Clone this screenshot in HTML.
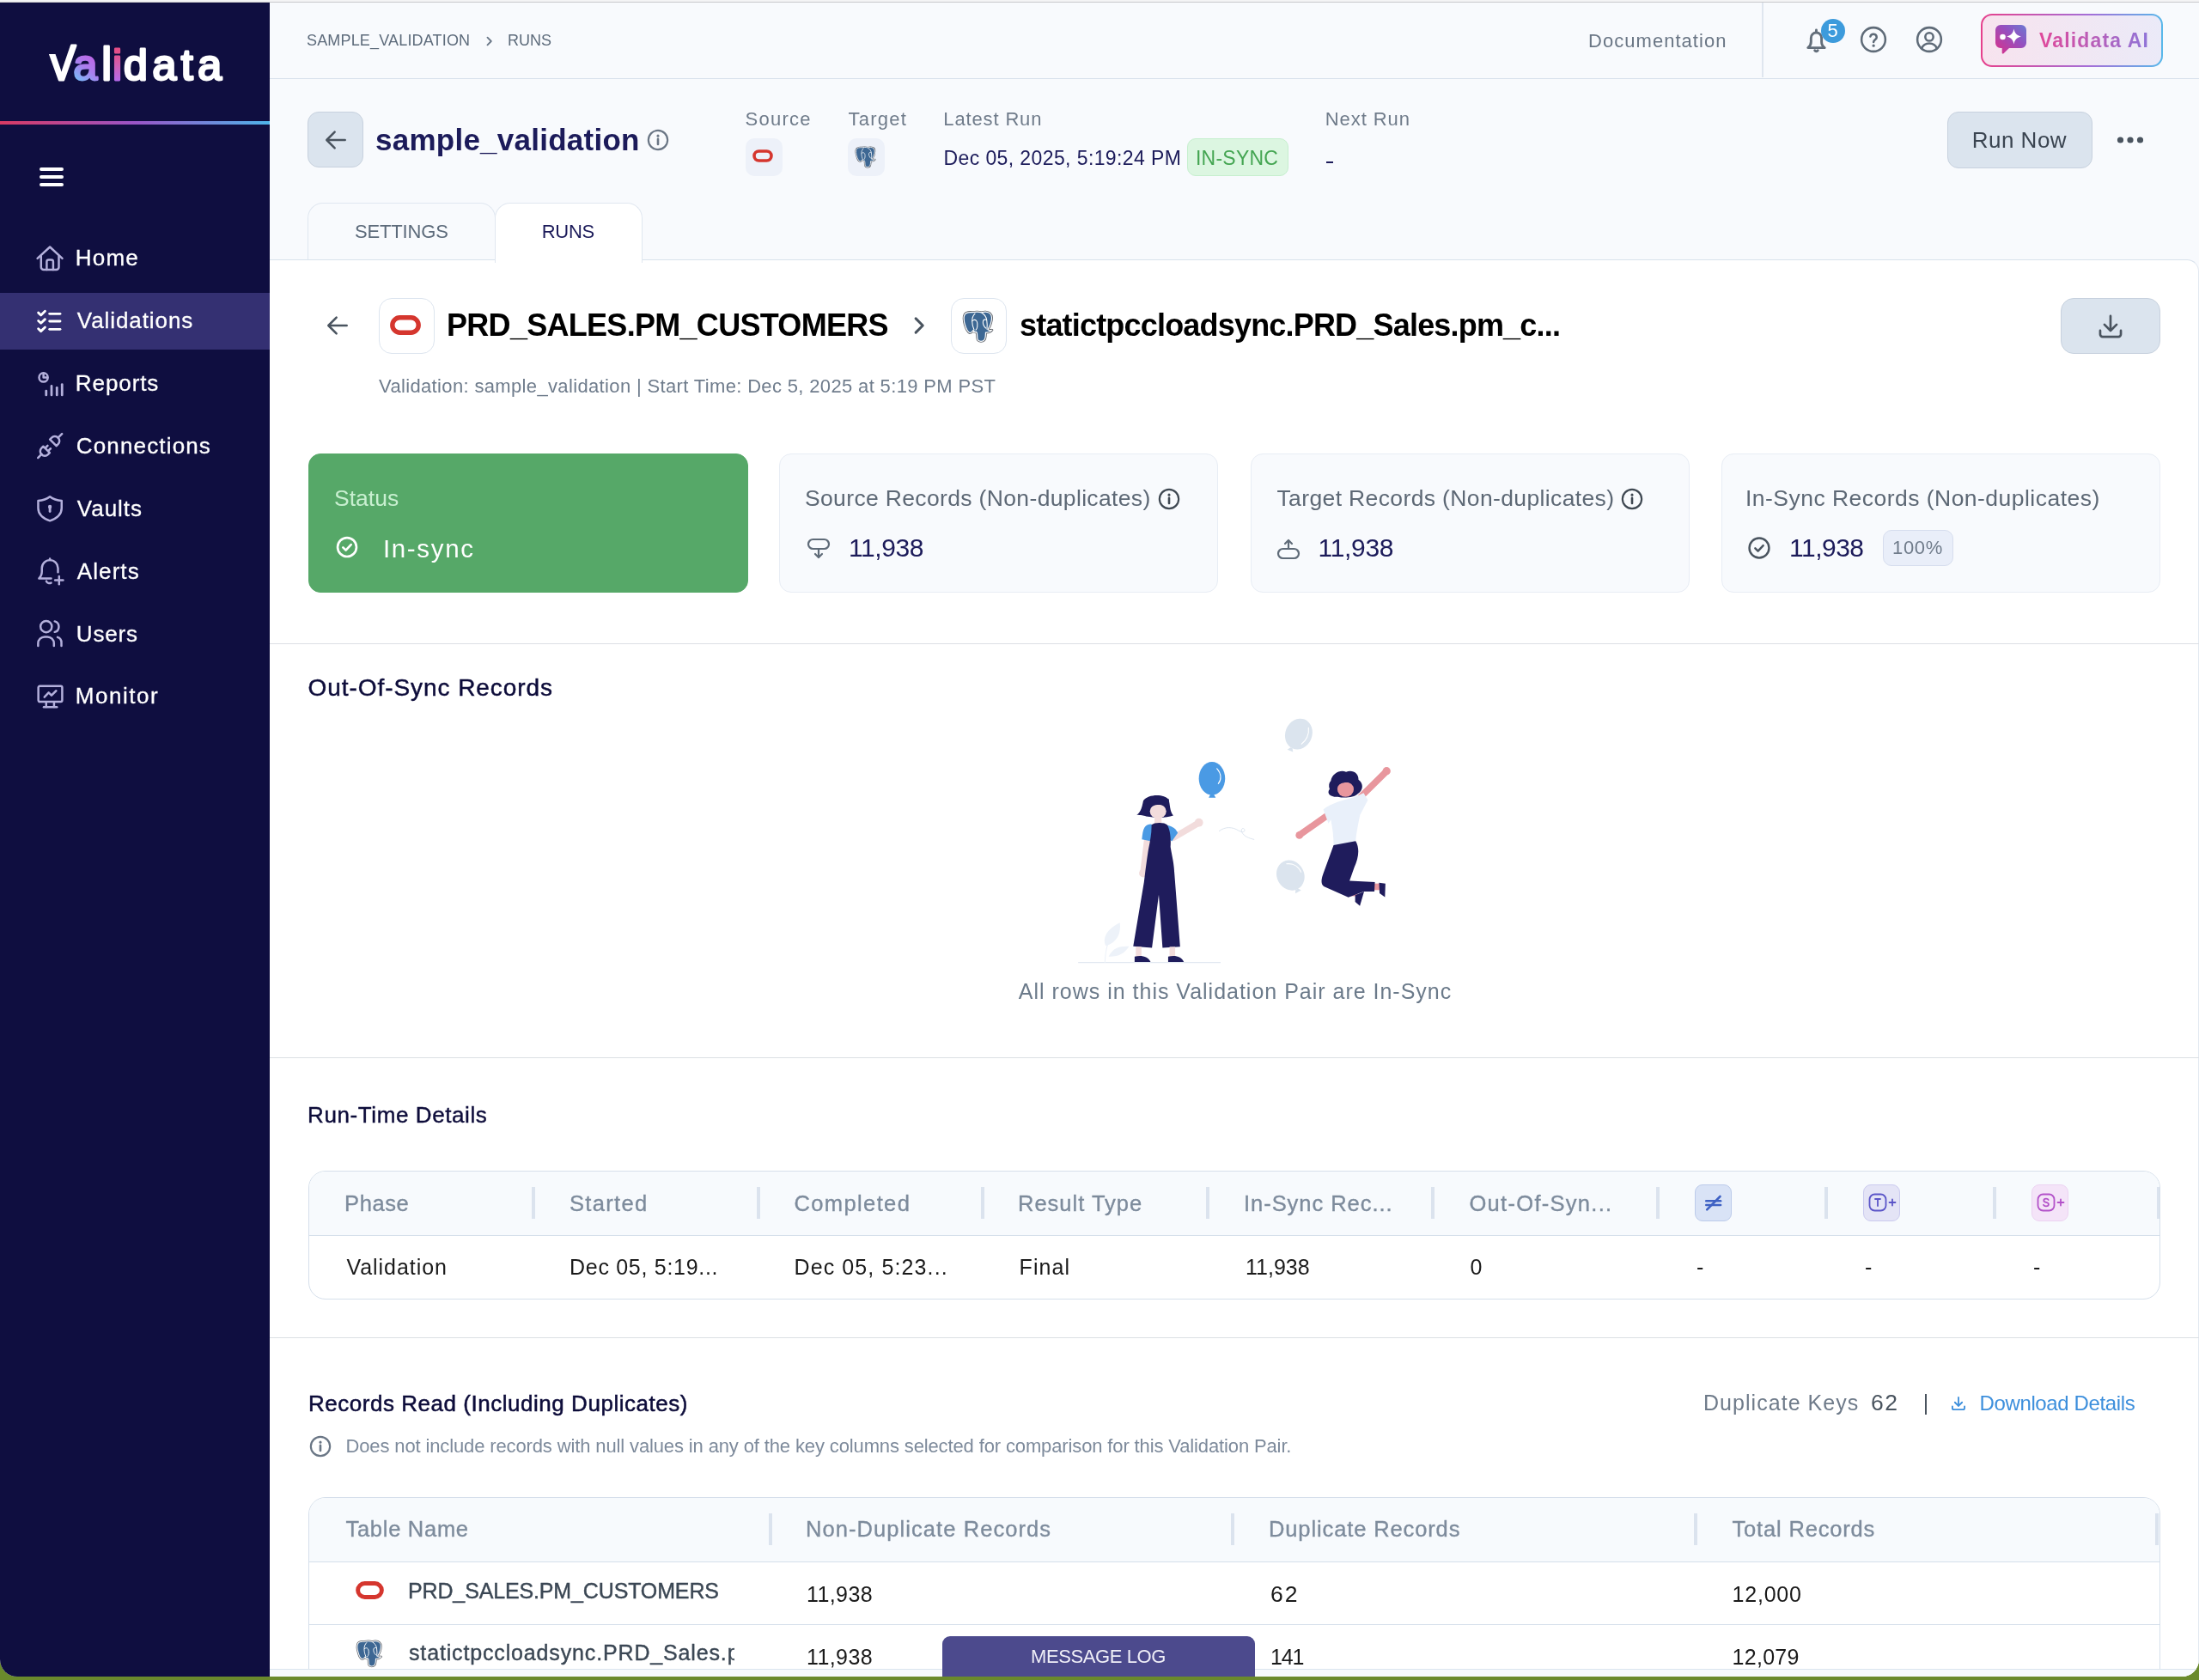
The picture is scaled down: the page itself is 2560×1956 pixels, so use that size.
<!DOCTYPE html>
<html lang="en">
<head>
<meta charset="utf-8">
<title>Validata - sample_validation runs</title>
<style>
*{box-sizing:border-box;margin:0;padding:0}
html,body{width:2560px;height:1956px;overflow:hidden;background:#6a8a2c}
body{font-family:"Liberation Sans",sans-serif;color:#1a1a1a;position:relative}
.win{will-change:transform;position:absolute;left:0;top:0;width:2560px;height:1952px;background:#f8fafd;border-radius:0 0 20px 20px;overflow:hidden}
.chrome{position:absolute;left:0;top:0;width:2560px;height:3px;background:#f4f4f5;border-bottom:1px solid #c9c9cb;z-index:50}
.abs{position:absolute}
.t{position:absolute;white-space:nowrap;line-height:1}
svg{position:absolute;overflow:visible}
/* ---------- sidebar ---------- */
.side{position:absolute;left:0;top:0;width:314px;height:1952px;background:#0f0e40}
.gline{position:absolute;left:0;top:141px;width:314px;height:4px;background:linear-gradient(90deg,#d93a63 0%,#9a55c8 50%,#4eb4ea 100%)}
.burger{position:absolute;left:46px;top:195px;width:28px;height:22px}
.burger i{position:absolute;left:0;width:28px;height:3.5px;border-radius:2px;background:#fff}
.nav{position:absolute;left:0;width:314px;height:66px}
.nav.on{background:#343072}
.nav span{position:absolute;left:90px;top:19px;font-size:26px;line-height:26px;color:#fff;white-space:nowrap;letter-spacing:.9px;-webkit-text-stroke:.3px #fff}
.nav svg{left:40px;top:15px;width:36px;height:36px;fill:none;stroke:#b4b0dc;stroke-width:1.65;stroke-linecap:round;stroke-linejoin:round}
/* ---------- top bar ---------- */
.top{position:absolute;left:314px;top:0;width:2246px;height:91.500px;background:#f8fafd;border-bottom:1.500px solid #d9e2ec}
.vdiv{position:absolute;left:2051px;top:0;width:2px;height:90px;background:#dfe6ef}
.ic{fill:none;stroke:#5f6b78;stroke-width:2;stroke-linecap:round;stroke-linejoin:round}
.aibtn{position:absolute;left:2306px;top:16px;width:212px;height:62px;border-radius:13px;background:linear-gradient(90deg,#e6408c,#a46fd8 60%,#58b8ea);padding:2px}
.aibtn>div{width:100%;height:100%;border-radius:11px;background:linear-gradient(90deg,#f7e3ee,#ebeaf8)}
.aitxt{background:linear-gradient(90deg,#e0489a,#8f74d8);-webkit-background-clip:text;background-clip:text;color:transparent;font-weight:bold}
/* ---------- header ---------- */
.btn{position:absolute;background:#dbe4ee;border:1.5px solid #c7d1de;border-radius:13px}
.tab{position:absolute;top:236px;height:68px;border:1.5px solid #e0e7f0;border-bottom:none;border-radius:18px 18px 0 0}
.panel{position:absolute;left:314px;top:301.500px;width:2246px;height:1651px;background:#fff;border-top:1.5px solid #d9e2ec;border-right:1.5px solid #e3e9f1;border-radius:0 14px 0 0}
.tabline{position:absolute;left:314px;top:301.500px;width:46px;height:2px;background:#d9e2ec}
.ibox{position:absolute;border-radius:10px;background:#edf1f9}
.wbox{position:absolute;border-radius:15px;background:#fff;border:1.5px solid #dde5ef}
.hr{position:absolute;left:314px;width:2246px;height:1px;background:#dcdfe4}
.card{position:absolute;top:528px;width:511px;height:162px;border-radius:14px;background:#f8fafd;border:1.5px solid #e8edf5}
.tbl{position:absolute;left:359px;width:2156px;border:1px solid #d5dfeb;border-radius:20px;background:#fff;overflow:hidden}
.th{position:absolute;left:0;top:0;width:100%;background:#f7fafd;border-bottom:1px solid #d5dfeb}
.sep{position:absolute;width:4px;height:37px;background:#dbe3ee}
.rowline{position:absolute;left:0;width:100%;height:1px;background:#d5dfeb}
.hd{font-size:25.500px;color:#7d8b9c;-webkit-text-stroke:.35px #7d8b9c}
.td{font-size:25px;color:#1a1a1a}
.mini{position:absolute;width:43px;height:43px;border-radius:9px;border:1.5px solid}
#bc1{letter-spacing:0.17px;margin-left:-1.0px}
#doc{letter-spacing:1.04px;margin-left:-1.0px}
#title{letter-spacing:0.25px;margin-left:-1.0px}
#lsrc{letter-spacing:1.24px;margin-left:-0.4px}
#ltgt{letter-spacing:1.26px;margin-left:0.5px}
#llat{letter-spacing:0.86px;margin-left:-0.7px}
#date{letter-spacing:0.40px;margin-left:-0.5px}
#insync{letter-spacing:0.23px;margin-left:-2.0px}
#lnext{letter-spacing:0.91px;margin-left:-1.2px}
#runnow{letter-spacing:0.50px;margin-left:-1.3px}
#tset{letter-spacing:-0.13px;margin-left:-1.1px}
#truns{letter-spacing:-0.30px;margin-left:-1.3px}
#pair1{letter-spacing:-0.71px;margin-left:-2.0px}
#pair2{letter-spacing:-0.81px;margin-left:-1.0px}
#sub{letter-spacing:0.35px;margin-left:0.0px}
#c1l{letter-spacing:0.00px;margin-left:-1.0px}
#c1v{letter-spacing:1.68px;margin-left:-1.1px}
#c2l{letter-spacing:0.35px;margin-left:-1.0px}
#c2v{letter-spacing:-0.40px;margin-left:-2.0px}
#c3l{letter-spacing:0.37px;margin-left:0.5px}
#c3v{letter-spacing:-0.30px;margin-left:-1.5px}
#c4l{letter-spacing:0.47px;margin-left:-2.0px}
#c4v{letter-spacing:-0.50px;margin-left:-1.0px}
#pct{letter-spacing:0.67px;margin-left:-1.0px}
#h1{letter-spacing:0.94px;margin-left:-0.5px}
#allrows{letter-spacing:0.99px;margin-left:-0.2px}
#h2{letter-spacing:0.60px;margin-left:-2.0px}
#r1{letter-spacing:0.62px;margin-left:-1.0px}
#r2{letter-spacing:1.33px;margin-left:-1.0px}
#r3{letter-spacing:1.38px;margin-left:-0.5px}
#r4{letter-spacing:1.00px;margin-left:-2.0px}
#r5{letter-spacing:0.96px;margin-left:-1.0px}
#r6{letter-spacing:1.29px;margin-left:-0.5px}
#v1{letter-spacing:0.94px;margin-left:0.5px}
#v2{letter-spacing:0.71px;margin-left:-2.0px}
#v3{letter-spacing:1.11px;margin-left:-2.5px}
#v4{letter-spacing:1.12px;margin-left:-2.5px}
#v5{letter-spacing:0.00px;margin-left:0.0px}
#v6{letter-spacing:0.00px;margin-left:-0.5px}
#h3{letter-spacing:0.53px;margin-left:-1.0px}
#dk{letter-spacing:1.04px;margin-left:-2.0px}
#dkv{letter-spacing:1.50px;margin-left:-1.0px}
#dl{letter-spacing:-0.37px;margin-left:-1.5px}
#note{letter-spacing:-0.13px;margin-left:-0.5px}
#s1{letter-spacing:0.72px;margin-left:0.5px}
#s2{letter-spacing:1.07px;margin-left:-2.0px}
#s3{letter-spacing:0.88px;margin-left:-2.0px}
#s4{letter-spacing:0.83px;margin-left:0.5px}
#n1{letter-spacing:-0.14px;margin-left:-1.0px}
#a1{letter-spacing:0.40px;margin-left:-1.0px}
#a2{letter-spacing:2.00px;margin-left:0.0px}
#a3{letter-spacing:0.80px;margin-left:0.5px}
#b1{letter-spacing:0.40px;margin-left:-1.0px}
#b2{letter-spacing:-1.20px;margin-left:0.0px}
#b3{letter-spacing:0.30px;margin-left:0.5px}
#msg{letter-spacing:-0.40px;margin-left:-1.0px}
#nv1{letter-spacing:1.17px;margin-left:-2.2px}
#nv2{letter-spacing:0.92px;margin-left:-0.2px}
#nv3{letter-spacing:0.92px;margin-left:-2.2px}
#nv4{letter-spacing:1.15px;margin-left:-1.2px}
#nv5{letter-spacing:0.98px;margin-left:-0.2px}
#nv6{letter-spacing:1.08px;margin-left:-0.2px}
#nv7{letter-spacing:0.80px;margin-left:-1.2px}
#nv8{letter-spacing:1.53px;margin-left:-2.2px}

</style>
</head>
<body>
<svg style="width:0;height:0;left:-10px;top:-10px" aria-hidden="true"><defs>
<symbol id="pg" viewBox="-1.500 -1.500 37 38.500"><path d="M10.500 1.200C7 .800 3 1.200 1.500 4C0 7 .800 12 2 16c1 4 3.500 8.500 5.500 9 1.500.300 3-1.500 4-3 .500 1.500 1.500 2.200 3 2.200 1 0 1.500.300 1.500 1.800l.300 5c.200 2.500 2.200 3.800 4.200 3.800 3 0 5-2.300 5.200-5.800l.300-4.500c2 .200 5-.300 7.300-2.700-1.800.400-3.800.200-4.800-.600 2-3.200 4.500-9.200 4.500-13.700 0-4-3-6.700-7-6.900-2-.100-3.500.300-4.500.700C18 .500 14 .500 10.500 1.200z" fill="#3d6793" stroke="#5b6068" stroke-width="2.900" stroke-linejoin="round"/><path d="M10.500 1.200C7 .800 3 1.200 1.500 4C0 7 .800 12 2 16c1 4 3.500 8.500 5.500 9 1.500.300 3-1.500 4-3 .500 1.500 1.500 2.200 3 2.200 1 0 1.500.300 1.500 1.800l.300 5c.200 2.500 2.200 3.800 4.200 3.800 3 0 5-2.300 5.200-5.800l.300-4.500c2 .200 5-.300 7.300-2.700-1.800.400-3.800.200-4.800-.600 2-3.200 4.500-9.200 4.500-13.700 0-4-3-6.700-7-6.900-2-.100-3.500.300-4.500.700C18 .500 14 .500 10.500 1.200z" fill="#3d6793" stroke="#fff" stroke-width="1.200" stroke-linejoin="round"/><g fill="none" stroke="#fff" stroke-width="1.100" stroke-linecap="round"><path d="M13.500 2.600c-2.500 2.400-3.400 5.400-3.300 9 .100 3.700.800 7 2.300 10"/><path d="M10.400 11.200c1.500-1.900 3.600-1.700 4.800-.200 1.300 1.700 1.300 4.500 1 7-.200 1.600-.800 2.800-1.700 3.700"/><path d="M21.500 1.800c3 1.700 5 4.700 5.700 8.200.600 3.500.600 7.500.300 10.800"/><path d="M27 10c-1.600-1-3.500-.500-4 1.500-.500 2.500.800 5.800 3 8"/><path d="M11.500 24c1.200.600 2.500.500 3.500-.200"/></g></symbol>
</defs></svg>
<div class="win">
<div class="side">
  <svg style="left:0;top:30px;width:314px;height:90px" viewBox="0 30 314 90" role="img" aria-label="Validata"><defs><linearGradient id="lga" gradientUnits="userSpaceOnUse" x1="90" y1="95" x2="110" y2="68"><stop offset="0" stop-color="#76bdf9"/><stop offset=".55" stop-color="#a97fee"/><stop offset="1" stop-color="#bb66e6"/></linearGradient><linearGradient id="lgi" gradientUnits="userSpaceOnUse" x1="136" y1="54" x2="136" y2="95"><stop offset="0" stop-color="#e64c83"/><stop offset=".25" stop-color="#e0528f"/><stop offset=".55" stop-color="#cf5fb4"/><stop offset="1" stop-color="#b56aec"/></linearGradient></defs><text y="93" font-family="Liberation Sans, sans-serif" font-size="50" fill="#fff" stroke="#fff" stroke-width="2.800" stroke-linejoin="round" stroke-linecap="round"><tspan x="54.500" font-size="57" textLength="34" lengthAdjust="spacingAndGlyphs">V</tspan><tspan x="85.500" fill="url(#lga)" stroke="url(#lga)">a</tspan><tspan x="118.300" font-size="53">l</tspan><tspan x="131" fill="url(#lgi)" stroke="url(#lgi)">i</tspan><tspan x="144" letter-spacing="5.600">data</tspan></text><rect x="46" y="40" width="26" height="23" fill="#0f0e40"/></svg>
  <div class="gline"></div>
  <div class="burger"><i style="top:0"></i><i style="top:9px"></i><i style="top:18px"></i></div>

  <div class="nav" style="top:268px"><svg viewBox="0 0 24 24"><path d="M2.400 11.900 12.070 3l9.600 8.900"/><path d="M5.200 10.200v8.500a2 2 0 0 0 2 2h9.800a2 2 0 0 0 2-2v-8.500"/><path d="M9.600 20.700v-6.200a1.500 1.500 0 0 1 1.500-1.500h2a1.500 1.500 0 0 1 1.500 1.500v6.200"/></svg><span id="nv1">Home</span></div>
  <div class="nav on" style="top:341px"><svg viewBox="0 0 24 24"><g stroke="#fff" stroke-width="1.900"><path d="m3.100 5.400 2 1.900 3.200-3.100"/><path d="m3.100 11.630 2 1.900 3.200-3.100"/><path d="m3.100 17.860 2 1.900 3.200-3.100"/><path d="M11.800 6.200h8.200"/><path d="M11.800 12h8.200"/><path d="M11.800 18.200h8.200"/></g></svg><span id="nv2">Validations</span></div>
  <div class="nav" style="top:414px"><svg viewBox="0 0 24 24"><circle cx="7.070" cy="6.930" r="3.400"/><path d="M7.070 4.300v2.630h2.600"/><g stroke-width="1.850"><path d="M9.170 17.400v3.200"/><path d="M13.330 13.600v7"/><path d="M17.500 14.900v5.700"/><path d="M21.500 12.400v8.200"/></g></svg><span id="nv3">Reports</span></div>
  <div class="nav" style="top:487px"><svg viewBox="0 0 24 24"><path d="m2.800 20.700 2.900-2.900"/><path d="M5.600 18.100a3.500 3.500 0 0 1 0-5l1.300-1.300 5 5-1.300 1.300a3.500 3.500 0 0 1-5 0z"/><path d="m8.500 13 1.800-1.800"/><path d="m10.800 15.300 1.800-1.800"/><path d="m21.400 2.100-3 3"/><path d="M18.400 5.100a3.500 3.500 0 0 1 0 5l-1.300 1.300-5-5 1.300-1.300a3.500 3.500 0 0 1 5 0z"/></svg><span id="nv4">Connections</span></div>
  <div class="nav" style="top:560px"><svg viewBox="0 0 24 24"><path d="M12.070 2.100c-2.500 1.900-5.500 2.900-9.100 3.200v5.700c0 4.800 3.600 8 9.100 9.900 5.500-1.900 9.100-5.100 9.100-9.900V5.300c-3.600-.3-6.600-1.300-9.100-3.200z"/><circle cx="12.070" cy="10" r="1.450" fill="#b4b0dc" stroke="none"/><path d="M12.070 10.500v3.200" stroke-width="1.900"/></svg><span id="nv5">Vaults</span></div>
  <div class="nav" style="top:633px"><svg viewBox="0 0 24 24"><path d="M13 17H3.600c1.600-1.500 2.230-3.200 2.230-5.500V9a6.250 6.250 0 0 1 12.500 0v3.200"/><path d="M12.070 2.700V1.700"/><path d="M9.300 19.100a2.700 2.700 0 0 0 3.700 1.300"/><path d="M19.200 15.300v6.200"/><path d="M16.100 18.400h6.200"/></svg><span id="nv6">Alerts</span></div>
  <div class="nav" style="top:706px"><svg viewBox="0 0 24 24"><circle cx="9.170" cy="5.720" r="4.400"/><path d="M2.900 20.700v-2a5.100 5.100 0 0 1 5.100-5.100h2.100a5.100 5.100 0 0 1 5.100 5.100v2"/><path d="M15.800 1.600a4.300 4.300 0 0 1 0 8.300"/><path d="M18 13.900a4.300 4.300 0 0 1 3 4.100v2.700"/></svg><span id="nv7">Users</span></div>
  <div class="nav" style="top:778px"><svg viewBox="0 0 24 24"><rect x="3.100" y="3.900" width="18.500" height="12.100" rx="1.100"/><path d="M7.300 20.100h10.200"/><path d="M9.170 16.200v3.800"/><path d="M15.280 16.200v3.800"/><path d="m7.800 12.400 3.300-3.500 2.200 2.200 3.600-3.600"/></svg><span id="nv8">Monitor</span></div>
</div>

<div class="top"></div>
<div class="t" id="bc1" style="left:358px;top:38px;font-size:18px;color:#5d6b7b">SAMPLE_VALIDATION</div>
<svg class="ic" style="left:562.500px;top:40.500px;width:14px;height:14px;stroke-width:1.900;stroke:#6b7888" viewBox="0 0 14 14"><path d="m4.500 2.700 4.300 4.300-4.300 4.300"/></svg>
<div class="t" id="bc2" style="left:591px;top:38px;font-size:18px;color:#5d6b7b">RUNS</div>
<div class="t" id="doc" style="left:1850px;top:37px;font-size:22px;color:#6a7685">Documentation</div>
<div class="vdiv"></div>
<!-- bell -->
<svg class="ic" style="left:2099px;top:30px;width:32px;height:32px;stroke-width:2.200;stroke:#636e7a" viewBox="0 0 24 24"><path d="M4.300 19.200c1.700-1.200 2.700-2.800 2.700-5.200v-3.400a4.600 4.600 0 0 1 9.200 0V14c0 2.400 1 4 2.700 5.200z"/><path d="M11.600 5.600V3.700"/><path d="M10.300 21.500a1.500 1.500 0 0 0 2.600 0"/></svg>
<div class="abs" style="left:2120px;top:21.500px;width:28px;height:28px;border-radius:50%;background:#3d9bdc"></div>
<div class="t" style="left:2127.500px;top:24.500px;font-size:22px;color:#fff">5</div>
<!-- help -->
<svg class="ic" style="left:2165px;top:30px;width:32px;height:32px;stroke-width:1.900" viewBox="0 0 24 24"><circle cx="12" cy="12" r="10.400"/><path d="M9.300 9.400a2.800 2.800 0 0 1 5.500.700c0 1.900-2.700 2.300-2.700 4.100"/><path d="M12.100 17.300v.1" stroke-width="2.400"/></svg>
<!-- user -->
<svg class="ic" style="left:2230px;top:30px;width:32px;height:32px;stroke-width:1.900" viewBox="0 0 24 24"><circle cx="12" cy="12" r="10.400"/><circle cx="12" cy="9.700" r="3.500"/><path d="M5.300 19.800a7.300 7.300 0 0 1 13.400 0"/></svg>
<!-- AI button -->
<div class="aibtn"><div></div></div>
<svg style="left:2322px;top:28px;width:38px;height:36px" viewBox="0 0 38 36"><defs><linearGradient id="gai" x1="0" y1="1" x2="1" y2="0"><stop offset="0" stop-color="#dc2f88"/><stop offset=".6" stop-color="#9450c0"/><stop offset="1" stop-color="#6c7ad2"/></linearGradient></defs><path d="M7 1h24a6 6 0 0 1 6 6v15a6 6 0 0 1-6 6H17l-6.500 6.200c-.900.800-1.800.400-1.800-.700V28H7a6 6 0 0 1-6-6V7a6 6 0 0 1 6-6z" fill="url(#gai)"/><circle cx="9.500" cy="15" r="3.300" fill="#fff"/><path d="M22.500 5.500c.9 5.200 3.300 7.700 8.500 9-5.200 1.300-7.600 3.800-8.500 9-.9-5.200-3.300-7.700-8.500-9 5.200-1.300 7.600-3.800 8.500-9z" fill="#fff"/></svg>
<div class="t aitxt" id="ai" style="left:2374px;top:36px;font-size:23px;letter-spacing:1.150px">Validata AI</div>

<div class="btn" style="left:358px;top:130px;width:65px;height:65px"></div>
<svg class="ic" style="left:375px;top:147px;width:32px;height:32px;stroke:#4a545f;stroke-width:1.900" viewBox="0 0 24 24"><path d="M20 12H4.500"/><path d="m11 5-7 7 7 7"/></svg>
<div class="t" id="title" style="left:438px;top:145px;font-size:35px;font-weight:bold;color:#1c1b5a">sample_validation</div>
<svg class="ic" style="left:753px;top:150px;width:26px;height:26px;stroke:#6a7685;stroke-width:2" viewBox="0 0 24 24"><circle cx="12" cy="12" r="10.300"/><path d="M12 11v5.500" stroke-width="2.400"/><path d="M12 7.400v.1" stroke-width="2.800"/></svg>

<div class="t" id="lsrc" style="left:868px;top:128px;font-size:22px;color:#6f7b8a">Source</div>
<div class="ibox" style="left:868px;top:161px;width:43px;height:44px"></div>
<svg style="left:876px;top:174px;width:24px;height:15px" viewBox="0 0 24 15"><rect x="2" y="2" width="20" height="11" rx="5.500" fill="none" stroke="#d5362e" stroke-width="3.600"/></svg>
<div class="t" id="ltgt" style="left:987px;top:128px;font-size:22px;color:#6f7b8a">Target</div>
<div class="ibox" style="left:987px;top:161px;width:43px;height:44px"></div>
<svg style="left:994.500px;top:169.800px;width:25px;height:26px"><use href="#pg"/></svg>
<div class="t" id="llat" style="left:1099px;top:128px;font-size:22px;color:#6f7b8a">Latest Run</div>
<div class="t" id="date" style="left:1099px;top:172.500px;font-size:23px;color:#1c1b5a">Dec 05, 2025, 5:19:24 PM</div>
<div class="abs" style="left:1382px;top:161px;width:118px;height:44px;border-radius:10px;background:#dcf6e1;border:1.5px solid #c6efce"></div>
<div class="t" id="insync" style="left:1394px;top:173px;font-size:23px;color:#44a552">IN-SYNC</div>
<div class="t" id="lnext" style="left:1544px;top:128px;font-size:22px;color:#6f7b8a">Next Run</div>
<div class="abs" style="left:1544px;top:188px;width:8px;height:2px;background:#1c1b5a"></div>

<div class="btn" style="left:2267px;top:130px;width:169px;height:66px"></div>
<div class="t" id="runnow" style="left:2297px;top:150px;font-size:26px;color:#3a4450">Run Now</div>
<svg style="left:2464px;top:158px;width:32px;height:10px" viewBox="0 0 32 10"><circle cx="4.500" cy="5" r="3.600" fill="#4a545f"/><circle cx="16" cy="5" r="3.600" fill="#4a545f"/><circle cx="27.500" cy="5" r="3.600" fill="#4a545f"/></svg>

<div class="tab" style="left:358px;width:219px;background:#f8fafd"></div>
<div class="t" id="tset" style="left:414px;top:259px;font-size:22px;color:#5d6b7b">SETTINGS</div>

<div class="panel"></div>
<div class="tab" style="left:576px;width:172px;background:#fff;height:70px"></div>
<div class="t" id="truns" style="left:632px;top:259px;font-size:22px;color:#1c1b5a">RUNS</div>

<!-- pair header -->
<svg class="ic" style="left:377px;top:363px;width:32px;height:32px;stroke:#4a545f;stroke-width:1.900" viewBox="0 0 24 24"><path d="M20 12H4.500"/><path d="m11 5-7 7 7 7"/></svg>
<div class="wbox" style="left:441px;top:347px;width:65px;height:65px"></div>
<svg style="left:454px;top:367px;width:36px;height:23px" viewBox="0 0 36 23"><rect x="2.800" y="2.800" width="30.400" height="17.400" rx="8.700" fill="none" stroke="#d5362e" stroke-width="5.400"/></svg>
<div class="t" id="pair1" style="left:522px;top:361px;font-size:36px;font-weight:bold;color:#000">PRD_SALES.PM_CUSTOMERS</div>
<svg class="ic" style="left:1058px;top:366px;width:26px;height:26px;stroke:#4a545f;stroke-width:2.800" viewBox="0 0 24 24"><path d="m7.500 4.500 7.500 7.500-7.500 7.500"/></svg>
<div class="wbox" style="left:1107px;top:347px;width:65px;height:65px"></div>
<svg style="left:1119.500px;top:360.500px;width:37px;height:38.500px"><use href="#pg"/></svg>
<div class="t" id="pair2" style="left:1188px;top:361px;font-size:36px;font-weight:bold;color:#000">statictpccloadsync.PRD_Sales.pm_c...</div>
<div class="btn" style="left:2399px;top:347px;width:116px;height:65px;border-radius:15px"></div>
<svg class="ic" style="left:2440px;top:363px;width:34px;height:34px;stroke:#4a545f;stroke-width:1.900" viewBox="0 0 24 24"><path d="M12 3.500v11.500"/><path d="m7 10.500 5 5 5-5"/><path d="M3.500 15.500v3a2 2 0 0 0 2 2h13a2 2 0 0 0 2-2v-3"/></svg>
<div class="t" id="sub" style="left:441px;top:439px;font-size:22px;color:#6f7c8c">Validation: sample_validation | Start Time: Dec 5, 2025 at 5:19 PM PST</div>

<!-- cards -->
<div class="card" style="left:359px;width:512px;background:#56a868;border-color:#56a868"></div>
<div class="t" id="c1l" style="left:390px;top:567px;font-size:26.500px;color:#c8efd0">Status</div>
<svg class="ic" style="left:390px;top:623px;width:28px;height:28px;stroke:#fff;stroke-width:2.300" viewBox="0 0 24 24"><circle cx="12" cy="12" r="9.400"/><path d="m8 12.300 2.800 2.800 5.200-5.600"/></svg>
<div class="t" id="c1v" style="left:447px;top:624px;font-size:29.500px;color:#fff">In-sync</div>

<div class="card" style="left:907px"></div>
<div class="t" id="c2l" style="left:938px;top:567px;font-size:26.500px;color:#5d6875">Source Records (Non-duplicates)</div>
<svg class="ic" style="left:1348px;top:568px;width:26px;height:26px;stroke:#3f4852;stroke-width:2" viewBox="0 0 24 24"><circle cx="12" cy="12" r="10.300"/><path d="M12 11v5.500" stroke-width="2.400"/><path d="M12 7.400v.1" stroke-width="2.800"/></svg>
<svg class="ic" style="left:939px;top:626px;width:28px;height:26px;stroke:#5f6b78;stroke-width:2.200" viewBox="0 0 28 26"><rect x="2" y="2" width="24" height="11" rx="5.500"/><path d="M14 13.500v9"/><path d="m10 19 4 4 4-4"/></svg>
<div class="t" id="c2v" style="left:990px;top:623px;font-size:30px;color:#1c1b5a">11,938</div>

<div class="card" style="left:1456px"></div>
<div class="t" id="c3l" style="left:1486px;top:567px;font-size:26.500px;color:#5d6875">Target Records (Non-duplicates)</div>
<svg class="ic" style="left:1887px;top:568px;width:26px;height:26px;stroke:#3f4852;stroke-width:2" viewBox="0 0 24 24"><circle cx="12" cy="12" r="10.300"/><path d="M12 11v5.500" stroke-width="2.400"/><path d="M12 7.400v.1" stroke-width="2.800"/></svg>
<svg class="ic" style="left:1486px;top:626px;width:28px;height:26px;stroke:#5f6b78;stroke-width:2.200" viewBox="0 0 28 26"><rect x="2" y="13" width="24" height="11" rx="5.500"/><path d="M14 12.500v-9"/><path d="m10 7 4-4 4 4"/></svg>
<div class="t" id="c3v" style="left:1536px;top:623px;font-size:30px;color:#1c1b5a">11,938</div>

<div class="card" style="left:2004px"></div>
<div class="t" id="c4l" style="left:2034px;top:567px;font-size:26.500px;color:#5d6875">In-Sync Records (Non-duplicates)</div>
<svg class="ic" style="left:2034px;top:624px;width:28px;height:28px;stroke:#4a545f;stroke-width:2.100" viewBox="0 0 24 24"><circle cx="12" cy="12" r="9.800"/><path d="m8 12.300 2.800 2.800 5.200-5.600"/></svg>
<div class="t" id="c4v" style="left:2084px;top:623px;font-size:30px;color:#1c1b5a">11,938</div>
<div class="abs" style="left:2192px;top:617px;width:82px;height:42px;border-radius:10px;background:#e9eef9;border:1.5px solid #d6ddee"></div>
<div class="t" id="pct" style="left:2204px;top:627px;font-size:22px;color:#6f7b8a">100%</div>

<div class="hr" style="top:749px"></div>
<div class="t" id="h1" style="left:359px;top:787px;font-size:28px;color:#0d0c3a;-webkit-text-stroke:.45px #0d0c3a">Out-Of-Sync Records</div>
<svg style="left:1140px;top:800px;width:600px;height:400px" viewBox="0 0 2199 1466" aria-label="celebration illustration">
<!-- ground + leaves -->
<path d="M422 1175H1030" stroke="#e1e8f1" stroke-width="4" fill="none"/>
<path d="M536 1176C538 1140 542 1115 548 1098" stroke="#edf2f9" stroke-width="4" fill="none"/>
<path d="M540 1104C522 1070 548 1030 600 1005C606 1050 588 1090 540 1104z" fill="#edf2f9"/>
<path d="M552 1150C570 1112 600 1104 640 1106C620 1138 590 1152 552 1150z" fill="#edf2f9"/>
<!-- balloons -->
<g transform="rotate(22 1363 200)"><ellipse cx="1363" cy="200" rx="57" ry="67" fill="#dbe4ee"/><path d="M1352 266l-9 14h26l-8-14z" fill="#dbe4ee"/><path d="M1392 160C1406 185 1404 215 1390 235" stroke="#fff" stroke-width="4" fill="none" stroke-linecap="round"/></g>
<ellipse cx="993" cy="390" rx="56" ry="71" fill="#4a9ae4"/><path d="M986 458l-7 14h30l-8-14z" fill="#4a9ae4"/><path d="M1014 348C1034 370 1034 395 1020 412" stroke="#fff" stroke-width="4" fill="none" stroke-linecap="round"/>
<g transform="rotate(-28 1328 803)"><ellipse cx="1328" cy="803" rx="58" ry="66" fill="#dbe4ee"/><path d="M1318 868l-8 13h28l-8-13z" fill="#dbe4ee"/><path d="M1336 752C1362 762 1376 785 1374 812" stroke="#fff" stroke-width="4" fill="none" stroke-linecap="round"/></g>
<path d="M1024 614C1050 594 1080 596 1106 612C1122 622 1136 618 1132 608C1128 598 1114 604 1120 618C1130 638 1150 644 1172 650" stroke="#dbe4ee" stroke-width="3.500" fill="none" stroke-linecap="round"/>
<!-- person 1 -->
<path d="M700 485C720 455 790 455 808 480C815 500 812 530 828 548C800 558 760 560 712 552C700 545 690 548 672 545C690 535 695 510 700 485z" fill="#1f1c5c"/>
<ellipse cx="763" cy="530" rx="35" ry="31" fill="#f2dcdc"/>
<path d="M722 522C738 498 788 494 802 520L810 478L712 478z" fill="#1f1c5c"/>
<rect x="748" y="552" width="30" height="36" fill="#f2dcdc"/>
<path d="M830 642L932 582" stroke="#f2dcdc" stroke-width="27" stroke-linecap="round"/><circle cx="937" cy="578" r="18" fill="#f2dcdc"/>
<path d="M718 640L700 790" stroke="#f2dcdc" stroke-width="27" stroke-linecap="round"/><circle cx="700" cy="794" r="18" fill="#f2dcdc"/>
<path d="M730 585C706 588 698 602 694 650L744 660L752 590z" fill="#4a9ae4"/>
<path d="M800 588C826 594 840 606 847 622L822 658L798 640z" fill="#4a9ae4"/>
<path d="M735 588C745 576 792 576 802 588C813 604 819 642 816 682C823 722 829 746 831 772L857 1108L782 1112L766 886L737 1112L657 1106L703 832C708 790 716 730 722 692C730 652 736 622 735 588z" fill="#1f1c5c"/>
<rect x="668" y="1108" width="24" height="46" fill="#f2dcdc"/><rect x="812" y="1108" width="24" height="46" fill="#f2dcdc"/>
<path d="M663 1173V1150C692 1142 722 1150 731 1173z" fill="#1f1c5c"/><path d="M806 1173V1150C836 1142 864 1150 873 1173z" fill="#1f1c5c"/>
<!-- person 2 -->
<path d="M1630 466L1735 362" stroke="#e8969d" stroke-width="28" stroke-linecap="round"/><circle cx="1738" cy="358" r="17" fill="#e8969d"/>
<path d="M1484 548L1368 630" stroke="#e8969d" stroke-width="28" stroke-linecap="round"/><circle cx="1366" cy="632" r="16" fill="#e8969d"/>
<path d="M1500 400C1505 370 1540 350 1565 362C1590 350 1620 365 1618 395C1640 410 1640 440 1615 455C1600 470 1560 475 1530 468C1500 470 1480 455 1495 435C1490 420 1492 408 1500 400z" fill="#1f1c5c"/>
<ellipse cx="1563" cy="436" rx="35" ry="32" fill="#e8969d"/>
<path d="M1524 428C1540 402 1590 398 1604 428C1612 400 1600 374 1565 372C1530 374 1518 400 1524 428z" fill="#1f1c5c"/>
<path d="M1468 522C1500 495 1560 480 1600 470L1640 452L1658 482L1625 545C1615 590 1608 630 1606 660L1512 677C1512 640 1508 600 1500 565L1490 582z" fill="#e9f0fa"/>
<rect x="1686" y="838" width="24" height="28" fill="#e8969d"/><rect x="1584" y="874" width="30" height="18" fill="#e8969d"/>
<path d="M1512 674L1606 657C1625 690 1618 730 1600 770L1580 826L1688 832L1686 872L1640 872L1575 897L1470 850C1455 840 1460 815 1470 790z" fill="#1f1c5c"/>
<path d="M1706 835L1733 838L1731 896L1708 880z" fill="#1f1c5c"/>
<path d="M1604 888L1642 872L1624 934L1604 916z" fill="#1f1c5c"/>
</svg>

<div class="t" id="allrows" style="left:1186px;top:1142px;font-size:25px;color:#6b7a8a">All rows in this Validation Pair are In-Sync</div>
<div class="hr" style="top:1231px"></div>
<div class="t" id="h2" style="left:360px;top:1285px;font-size:26px;color:#0d0c3a;-webkit-text-stroke:.4px #0d0c3a">Run-Time Details</div>
<div class="tbl" style="top:1363px;height:150px">
  <div class="th" style="height:75px"></div>
  <div class="sep" style="left:259px;top:18px"></div>
  <div class="sep" style="left:521px;top:18px"></div>
  <div class="sep" style="left:782px;top:18px"></div>
  <div class="sep" style="left:1044px;top:18px"></div>
  <div class="sep" style="left:1306px;top:18px"></div>
  <div class="sep" style="left:1568px;top:18px"></div>
  <div class="sep" style="left:1764px;top:18px"></div>
  <div class="sep" style="left:1960px;top:18px"></div>
  <div class="sep" style="left:2151px;top:18px"></div>
  <div class="mini" style="left:1613px;top:15px;background:#d9e3f6;border-color:#bccbea"></div>
  <div class="mini" style="left:1809px;top:15px;background:#e4e4f6;border-color:#cbcbef"></div>
  <div class="mini" style="left:2005px;top:15px;background:#f4e4f8;border-color:#ecd3f2"></div>
</div>
<div class="t hd" id="r1" style="left:402px;top:1389px">Phase</div>
<div class="t hd" id="r2" style="left:664px;top:1389px">Started</div>
<div class="t hd" id="r3" style="left:925px;top:1389px">Completed</div>
<div class="t hd" id="r4" style="left:1187px;top:1389px">Result Type</div>
<div class="t hd" id="r5" style="left:1449px;top:1389px">In-Sync Rec...</div>
<div class="t hd" id="r6" style="left:1711px;top:1389px">Out-Of-Syn...</div>
<svg style="left:1982px;top:1389px;width:24px;height:22px;fill:none;stroke:#3f62c4;stroke-width:2.600;stroke-linecap:round" viewBox="0 0 24 22"><path d="M4.300 9.200h16.800"/><path d="M4.300 14h16.800"/><path d="M20.500 4 5.200 19.300"/></svg>
<svg style="left:2175px;top:1386px;width:36px;height:28px;fill:none;stroke:#5b55c8;stroke-width:1.800;stroke-linecap:round;stroke-linejoin:round" viewBox="0 0 36 28"><rect x="1.500" y="4.500" width="19" height="19" rx="6"/><path d="M8 10h6"/><path d="M11 10v8"/><path d="M24.500 14h7"/><path d="M28 10.500v7"/></svg>
<svg style="left:2371px;top:1386px;width:36px;height:28px;fill:none;stroke:#b352c9;stroke-width:1.800;stroke-linecap:round;stroke-linejoin:round" viewBox="0 0 36 28"><rect x="1.500" y="4.500" width="19" height="19" rx="6"/><path d="M13.700 11c-.4-.9-1.300-1.300-2.700-1.300-1.600 0-2.700.7-2.700 2s1 1.800 2.700 2.200c1.800.4 2.900 1 2.900 2.300s-1.200 2.100-2.900 2.100c-1.500 0-2.500-.5-3-1.500"/><path d="M24.500 14h7"/><path d="M28 10.500v7"/></svg>
<div class="t td" id="v1" style="left:403px;top:1463px">Validation</div>
<div class="t td" id="v2" style="left:665px;top:1463px">Dec 05, 5:19...</div>
<div class="t td" id="v3" style="left:927px;top:1463px">Dec 05, 5:23...</div>
<div class="t td" id="v4" style="left:1189px;top:1463px">Final</div>
<div class="t td" id="v5" style="left:1450px;top:1463px">11,938</div>
<div class="t td" id="v6" style="left:1712px;top:1463px">0</div>
<div class="t td" style="left:1975px;top:1463px">-</div>
<div class="t td" style="left:2171px;top:1463px">-</div>
<div class="t td" style="left:2367px;top:1463px">-</div>

<div class="hr" style="top:1557px"></div>
<div class="t" id="h3" style="left:360px;top:1621px;font-size:26px;color:#0d0c3a;-webkit-text-stroke:.5px #0d0c3a">Records Read (Including Duplicates)</div>
<div class="t" id="dk" style="left:1985px;top:1621px;font-size:25px;color:#6f7b8a">Duplicate Keys</div>
<div class="t" id="dkv" style="left:2179px;top:1620px;font-size:26.500px;color:#4a545f">62</div>
<div class="abs" style="left:2241px;top:1623px;width:2px;height:24px;background:#4a545f"></div>
<svg style="left:2270px;top:1624px;width:20px;height:20px;fill:none;stroke:#3d8fdc;stroke-width:2.200;stroke-linecap:round;stroke-linejoin:round" viewBox="0 0 24 24"><path d="M12 3.500v11.500"/><path d="m7 10.500 5 5 5-5"/><path d="M3.500 16v2.500a2 2 0 0 0 2 2h13a2 2 0 0 0 2-2V16"/></svg>
<div class="t" id="dl" style="left:2306px;top:1622px;font-size:24px;color:#3d8fdc">Download Details</div>
<svg class="ic" style="left:360px;top:1671px;width:26px;height:26px;stroke:#6a7685;stroke-width:2" viewBox="0 0 24 24"><circle cx="12" cy="12" r="10.300"/><path d="M12 11v5.500" stroke-width="2.400"/><path d="M12 7.400v.1" stroke-width="2.800"/></svg>
<div class="t" id="note" style="left:403px;top:1673px;font-size:22px;color:#7d8a9b">Does not include records with null values in any of the key columns selected for comparison for this Validation Pair.</div>

<div class="tbl" style="top:1743px;height:230px;border-radius:20px 20px 0 0">
  <div class="th" style="height:75px"></div>
  <div class="sep" style="left:535px;top:18px"></div>
  <div class="sep" style="left:1073px;top:18px"></div>
  <div class="sep" style="left:1612px;top:18px"></div>
  <div class="sep" style="left:2149px;top:18px"></div>
  <div class="rowline" style="top:147px"></div>
</div>
<div class="t hd" id="s1" style="left:402px;top:1768px">Table Name</div>
<div class="t hd" id="s2" style="left:940px;top:1768px">Non-Duplicate Records</div>
<div class="t hd" id="s3" style="left:1479px;top:1768px">Duplicate Records</div>
<div class="t hd" id="s4" style="left:2016px;top:1768px">Total Records</div>
<svg style="left:414px;top:1841px;width:33px;height:21px" viewBox="0 0 36 23"><rect x="2.800" y="2.800" width="30.400" height="17.400" rx="8.700" fill="none" stroke="#d5362e" stroke-width="5.400"/></svg>
<div class="t" id="n1" style="left:476px;top:1840px;font-size:25px;color:#3b4754;-webkit-text-stroke:.4px #3b4754">PRD_SALES.PM_CUSTOMERS</div>
<div class="t td" id="a1" style="left:940px;top:1844px">11,938</div>
<div class="t td" id="a2" style="left:1479px;top:1843px;font-size:26.500px">62</div>
<div class="t td" id="a3" style="left:2016px;top:1844px">12,000</div>
<svg style="left:413.700px;top:1908.700px;width:31.600px;height:32.800px"><use href="#pg"/></svg>
<div class="abs" style="left:476px;top:1905px;width:379px;height:40px;overflow:hidden"><div class="t" id="n2" style="left:0;top:7px;font-size:25px;color:#3b4754;letter-spacing:.85px;-webkit-text-stroke:.4px #3b4754">statictpccloadsync.PRD_Sales.pm_customers</div></div>
<div class="t td" id="b1" style="left:940px;top:1917px">11,938</div>
<div class="t td" id="b2" style="left:1479px;top:1917px">141</div>
<div class="t td" id="b3" style="left:2016px;top:1917px">12,079</div>
<div class="abs" style="left:314px;top:1943px;width:2246px;height:9px;background:#f6f9fc;border-top:1.5px solid #dbe4ee"></div>
<div class="abs" style="left:1097px;top:1905px;width:364px;height:50px;border-radius:9px 9px 0 0;background:#4c4a8d"></div>
<div class="t" id="msg" style="left:1201px;top:1918px;font-size:22px;color:#efeef7">MESSAGE LOG</div>


</div>
<div class="chrome"></div>
</body>
</html>
